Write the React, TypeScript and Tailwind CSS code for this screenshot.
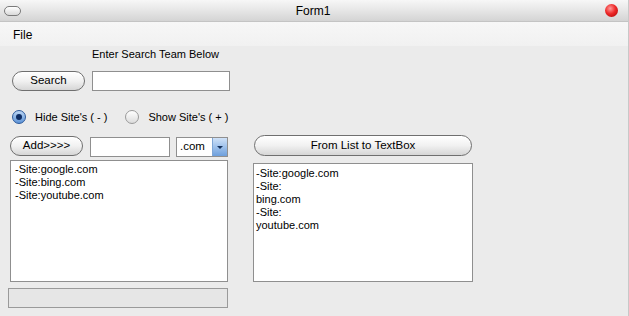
import React from "react";

const font = "font-['Liberation_Sans',Arial,sans-serif]";

function PillButton({ label, className }: { label: string; className: string }) {
  return (
    <div
      className={`${className} flex items-center justify-center rounded-full border border-[#6f6f6f] bg-gradient-to-b from-[#ffffff] via-[#f1f1f1] to-[#d6d6d6] text-[11.5px] text-black shadow-[inset_0_1px_0_#fff]`}
    >
      {label}
    </div>
  );
}

function Radio({ checked, label }: { checked: boolean; label: string }) {
  return (
    <div className="flex items-center">
      <div
        className={`w-[14px] h-[14px] rounded-full border flex items-center justify-center ${
          checked
            ? "border-[#2c5a9c] bg-gradient-to-b from-[#bcd6f4] to-[#5d93d6]"
            : "border-[#9a9a9a] bg-gradient-to-b from-[#ffffff] to-[#dcdcdc]"
        }`}
      >
        {checked && <div className="w-[6px] h-[6px] rounded-full bg-[#0d2c63]" />}
      </div>
      <span className="ml-[9px] text-[11px] text-black">{label}</span>
    </div>
  );
}

export default function App() {
  return (
    <div className={`${font} w-[629px] h-[316px] overflow-hidden bg-[#ebebeb] flex flex-col border-r border-[#c8c8c8]`}>
      {/* TITLE BAR */}
      <div className="h-[22px] flex items-center bg-gradient-to-b from-[#f7f7f7] via-[#e6e6e6] to-[#d4d4d4] border-b border-[#c4c4c4] px-[4px]">
        <div className="w-[17px] h-[10px] rounded-full border border-[#7a7a7a] bg-gradient-to-b from-[#ffffff] to-[#d9d9d9]" />
        <div className="flex-1 text-center text-[12px] text-black">Form1</div>
        <div className="w-[13px] h-[13px] mr-[6px] rounded-full bg-[radial-gradient(circle_at_40%_35%,#ff9b9b_0%,#ee2a2a_45%,#a80000_100%)]" />
      </div>

      {/* MENU */}
      <div className="h-[24px] flex items-center bg-gradient-to-b from-[#f7f7f7] to-[#f1f1f1] pl-[13px] pt-[2px] text-[12px] text-black">
        File
      </div>

      {/* CONTENT */}
      <div className="flex-1 pl-[8px] flex flex-col">
        <div className="ml-[84px] mt-[1px] h-[14px] leading-[14px] text-[11px] text-black">
          Enter Search Team Below
        </div>

        <div className="flex items-center mt-[9px] ml-[4px]">
          <PillButton label="Search" className="w-[73px] h-[20px]" />
          <div className="ml-[7px] mt-[1px] w-[138px] h-[20px] bg-white border border-[#8f8f8f]" />
        </div>

        <div className="flex items-center mt-[19px] ml-[4px] h-[14px]">
          <Radio checked label="Hide Site's ( - )" />
          <div className="ml-[18px]">
            <Radio checked={false} label="Show Site's ( + )" />
          </div>
        </div>

        <div className="flex mt-[12px]">
          {/* LEFT COLUMN */}
          <div className="w-[221px] ml-[1px] flex flex-col">
            <div className="flex items-start h-[21px]">
              <PillButton label="Add>>>>" className="ml-[1px] w-[73px] h-[20px]" />
              <div className="ml-[7px] mt-[1px] w-[80px] h-[20px] bg-white border border-[#8f8f8f]" />
              <div className="ml-[6px] mt-[1px] w-[52px] h-[20px] bg-white border border-[#8f8f8f] flex items-center">
                <span className="flex-1 pl-[3px] text-[11.5px] text-black">.com</span>
                <div className="w-[15px] h-[18px] bg-gradient-to-b from-[#cfe2f8] to-[#6d9fdc] border-l border-[#7ea6d6] flex items-center justify-center">
                  <div className="w-0 h-0 border-l-[3px] border-r-[3px] border-t-[3px] border-l-transparent border-r-transparent border-t-[#14305c]" />
                </div>
              </div>
            </div>
            <div className="mt-[3px] ml-[1px] w-[218px] h-[122px] bg-white border border-[#8f8f8f] pl-[4px] pt-[2px] text-[11px] leading-[13px] text-black">
              <div>-Site:google.com</div>
              <div>-Site:bing.com</div>
              <div>-Site:youtube.com</div>
            </div>
            <div className="mt-[6px] -ml-[1px] w-[220px] h-[20px] border border-[#9a9a9a] bg-[#e6e6e6]" />
          </div>

          {/* RIGHT COLUMN */}
          <div className="ml-[23px] w-[220px] flex flex-col">
            <PillButton label="From List to TextBox" className="-mt-[1px] ml-[1px] w-[218px] h-[21px]" />
            <div className="mt-[7px] w-[220px] h-[119px] bg-white border border-[#8f8f8f] pl-[2px] pt-[3px] text-[11px] leading-[13px] text-black">
              <div>-Site:google.com</div>
              <div>-Site:</div>
              <div>bing.com</div>
              <div>-Site:</div>
              <div>youtube.com</div>
            </div>
          </div>
        </div>
      </div>
    </div>
  );
}
